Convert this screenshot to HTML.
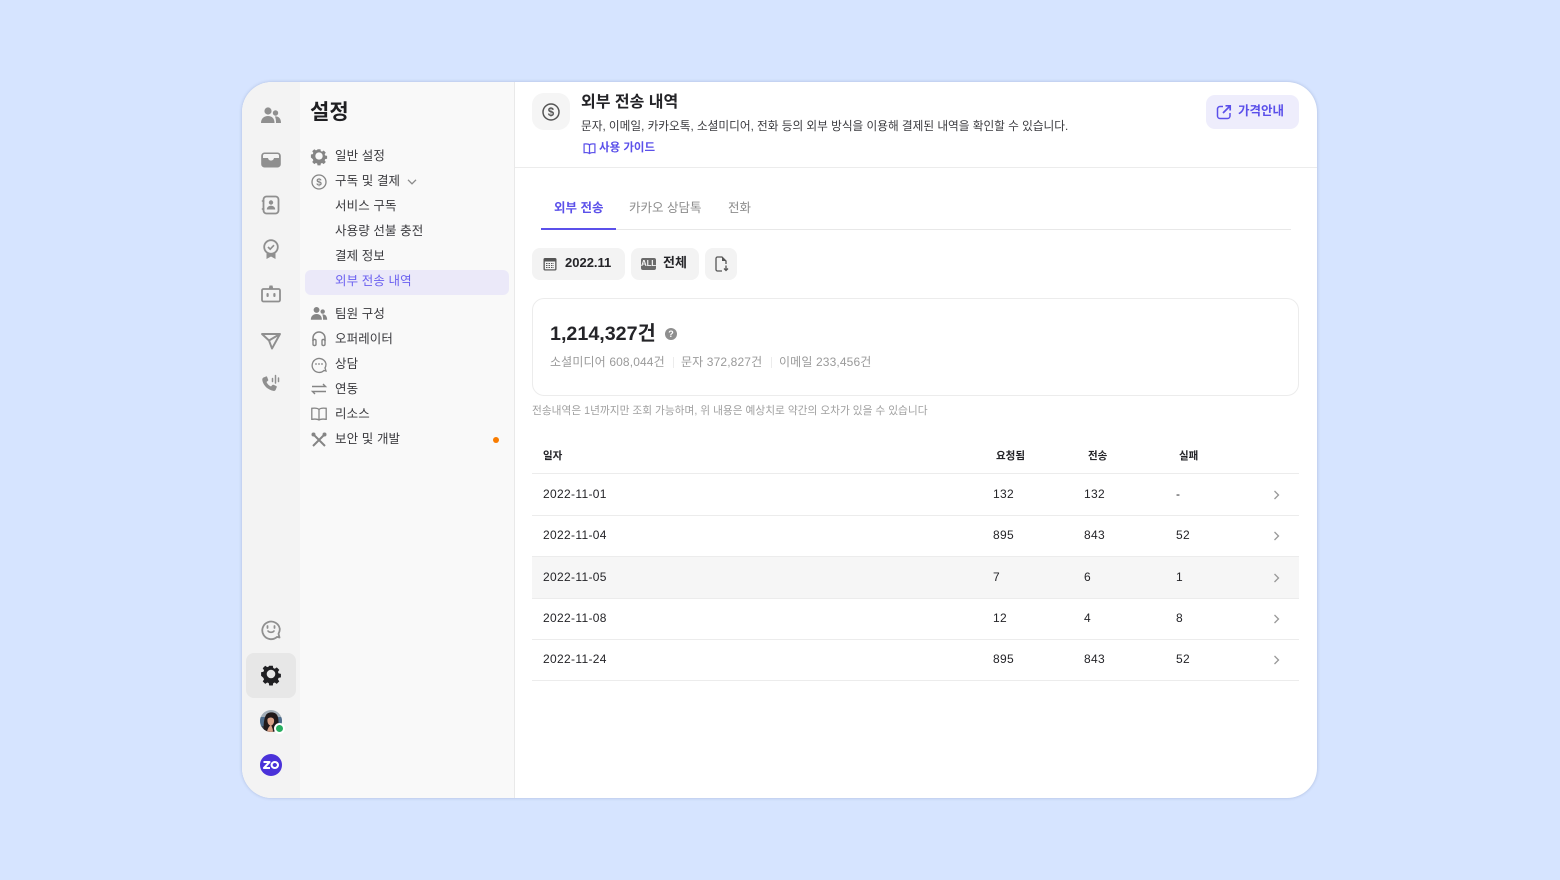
<!DOCTYPE html>
<html lang="ko"><head><meta charset="utf-8"><title>설정</title>
<style>
*{box-sizing:border-box;margin:0;padding:0}
html,body{width:1560px;height:880px;overflow:hidden;background:#d6e4ff}
body{font-family:"Liberation Sans","Noto Sans CJK KR",sans-serif;color:#242428;position:relative}
.t{position:absolute;white-space:nowrap;line-height:20px}
.abs{position:absolute}
svg{position:absolute;overflow:visible}
#app{position:absolute;left:242px;top:82px;width:1075px;height:716px;border-radius:30px;background:#fff;overflow:hidden;box-shadow:0 0 3px rgba(70,90,140,.3)}
.m{font-size:12.5px;color:#3a3a3e;letter-spacing:.1px}
.r{font-size:12px;color:#242428;letter-spacing:.33px}
.th{font-size:10.5px;font-weight:700;color:#242428}
.line{position:absolute;left:532px;width:767px;height:1px;background:#ececec}
</style></head><body>
<div id="app"></div>
<div class="abs" style="left:242px;top:82px;width:58px;height:716px;background:#f3f3f3;border-radius:30px 0 0 30px"></div>
<div class="abs" style="left:300px;top:82px;width:215px;height:716px;background:#f9f9f9;border-right:1px solid #e9e9e9"></div>
<div class="abs" style="left:246px;top:653px;width:50px;height:45px;background:#e7e7e7;border-radius:8px"></div>

<!-- rail icons -->
<svg style="left:260px;top:105px" width="22" height="22" viewBox="0 0 22 22" fill="#8f8f8f"><circle cx="8" cy="6" r="3.6"/><circle cx="15.5" cy="8" r="2.7"/><path d="M1 18c0-4.500 3-7 7-7s6.500 2.500 6.500 7z"/><path d="M15 11.500c3.500-.5 6 2 6 6.500h-5c0-2.500-.2-4.500-1-6.500z"/></svg>
<svg style="left:260px;top:149px" width="22" height="22" viewBox="0 0 22 22"><path fill="#8f8f8f" d="M4.500 3.500h13a3.300 3.300 0 0 1 3.300 3.300v8.400a3.300 3.300 0 0 1-3.300 3.300h-13a3.300 3.300 0 0 1-3.300-3.300V6.800a3.300 3.300 0 0 1 3.300-3.300z"/><path fill="#f3f3f3" d="M3 6.500c0-.8.7-1.500 1.500-1.500h13c.8 0 1.500.7 1.500 1.500v2.500h-5c-.5 1.800-1.300 2.500-3 2.500S8.500 10.800 8 9H3z"/></svg>
<svg style="left:260px;top:194px" width="22" height="22" viewBox="0 0 22 22"><rect x="3.500" y="2.500" width="15" height="17" rx="3" fill="none" stroke="#8f8f8f" stroke-width="1.800"/><path d="M1.800 7h2.500M1.800 15h2.500" stroke="#8f8f8f" stroke-width="1.500"/><circle cx="11" cy="8.500" r="2.200" fill="#8f8f8f"/><path fill="#8f8f8f" d="M6.800 15.500c0-2.500 2-3.800 4.200-3.800s4.200 1.300 4.200 3.800z"/></svg>
<svg style="left:260px;top:238px" width="22" height="22" viewBox="0 0 22 22"><circle cx="11" cy="9" r="6.800" fill="none" stroke="#8f8f8f" stroke-width="1.800"/><path d="M8 9l2.200 2.200L14 7.200" fill="none" stroke="#8f8f8f" stroke-width="1.700"/><path fill="#8f8f8f" d="M6.500 15.500h9V21L11 18.500 6.500 21z"/></svg>
<svg style="left:260px;top:283px" width="22" height="22" viewBox="0 0 22 22"><path fill="#8f8f8f" d="M9.500 2.500h3l.7 3h-4.400z"/><rect x="2" y="6" width="18" height="12.500" rx="1.500" fill="none" stroke="#8f8f8f" stroke-width="1.800"/><rect x="6.500" y="10" width="2.200" height="4" rx="1" fill="#8f8f8f"/><rect x="13.300" y="10" width="2.200" height="4" rx="1" fill="#8f8f8f"/></svg>
<svg style="left:260px;top:330px" width="22" height="22" viewBox="0 0 22 22"><path d="M2 4h18L12 18.500 9 10.500zM9 10.500L20 4" fill="none" stroke="#8f8f8f" stroke-width="1.900" stroke-linejoin="round"/></svg>
<svg style="left:260px;top:373px" width="22" height="22" viewBox="0 0 22 22"><path fill="#8f8f8f" d="M3.500 4.500L6 3.500c.6-.2 1 .1 1.200.6l1 2.600c.2.500 0 .9-.4 1.200L6.500 9c.8 2 2.300 3.500 4.500 4.500l1.200-1.400c.4-.4.800-.5 1.300-.3l2.700 1.200c.6.300.7.700.5 1.200l-1 2.600c-.4 1-1.300 1.300-2.300 1.100C7.500 16.700 3 12.200 2.300 7c-.1-1.200.3-2 1.200-2.500z"/><path d="M12.500 5.500v3M15.500 2.500v7.500M18.500 5v3.500" stroke="#8f8f8f" stroke-width="1.500" stroke-linecap="round"/></svg>
<svg style="left:260px;top:618px" width="22" height="22" viewBox="0 0 22 22"><path d="M19.500 19.500l-2.500-.6A8.800 8.800 0 1 1 19.800 11c0 1.900-.5 3.400-1.300 4.800z" fill="none" stroke="#8f8f8f" stroke-width="1.800" stroke-linejoin="round"/><path d="M7.500 8v2M14.500 8v2" stroke="#8f8f8f" stroke-width="1.800" stroke-linecap="round"/><path d="M8 13c1.500 1.800 4.500 1.800 6 0" fill="none" stroke="#8f8f8f" stroke-width="1.600" stroke-linecap="round"/></svg>
<svg style="left:260px;top:663px" width="22" height="22" viewBox="0 0 22 22"><path d="M9 1.800h4l.5 2.600 1.700.7 2.200-1.500 2.800 2.800-1.500 2.200.7 1.700 2.600.5v4l-2.600.5-.7 1.700 1.500 2.200-2.800 2.800-2.200-1.500-1.700.7-.5 2.600H9l-.5-2.600-1.700-.7-2.200 1.500-2.800-2.800 1.500-2.200-.7-1.700L0 13v-4l2.600-.5.7-1.700-1.500-2.200 2.800-2.800 2.200 1.500 1.700-.7z" transform="translate(1.100 1.100) scale(.9)" fill="#1f1f22"/><circle cx="11" cy="11" r="4.300" fill="#e7e7e7"/></svg>
<!-- avatar -->
<svg style="left:260px;top:710px" width="22" height="22" viewBox="0 0 22 22"><defs><clipPath id="c"><circle cx="11" cy="11" r="11"/></clipPath></defs><g clip-path="url(#c)"><rect width="22" height="22" fill="#a3aeb8"/><rect y="7" width="22" height="9" fill="#4e6d8c"/><rect y="16" width="22" height="6" fill="#3a4654"/><path fill="#20191a" d="M4 22c-1-6 0-14 2-17C8 1.500 15 1.500 17 5c2 3 2 10 0 17z"/><path fill="#d9a288" d="M7.500 9c1.500-2 5.500-2 6.500.5.500 3-1 6-3.200 6S7 12.500 7.500 9z"/><path fill="#d9a288" d="M7 22c.5-3 2-6 4-7 1 2 2 4 2 7z"/></g></svg>
<div class="abs" style="left:274px;top:723px;width:11px;height:11px;background:#27ae60;border:2px solid #fff;border-radius:50%;box-sizing:border-box"></div>
<div class="abs" style="left:260px;top:754px;width:22px;height:22px;background:#4a32d9;border-radius:50%"></div>
<svg style="left:260px;top:754px" width="22" height="22" viewBox="0 0 22 22"><path d="M3.500 8h6L4 14h6" fill="none" stroke="#fff" stroke-width="2.100" stroke-linejoin="round"/><ellipse cx="14.800" cy="11" rx="3.200" ry="3" fill="none" stroke="#fff" stroke-width="2.100"/></svg>

<!-- settings nav -->
<div class="t" style="left:310px;top:100px;font-size:21px;font-weight:700;line-height:26px;color:#1f1f22">설정</div>
<div class="abs" style="left:305px;top:270px;width:204px;height:25px;background:#ebe9f9;border-radius:6px"></div>
<div class="t m" style="left:335px;top:146px">일반 설정</div>
<div class="t m" style="left:335px;top:171px">구독 및 결제</div>
<div class="t m" style="left:335px;top:196px">서비스 구독</div>
<div class="t m" style="left:335px;top:221px">사용량 선불 충전</div>
<div class="t m" style="left:335px;top:246px">결제 정보</div>
<div class="t m" style="left:335px;top:271px;color:#6a5ff0">외부 전송 내역</div>
<div class="t m" style="left:335px;top:304px">팀원 구성</div>
<div class="t m" style="left:335px;top:329px">오퍼레이터</div>
<div class="t m" style="left:335px;top:354px">상담</div>
<div class="t m" style="left:335px;top:379px">연동</div>
<div class="t m" style="left:335px;top:404px">리소스</div>
<div class="t m" style="left:335px;top:429px">보안 및 개발</div>
<div class="abs" style="left:493px;top:437px;width:6px;height:6px;border-radius:50%;background:#f97c00"></div>
<svg style="left:406px;top:178px" width="12" height="8" viewBox="0 0 12 8"><path d="M2 1.800l4 4 4-4" fill="none" stroke="#8a8a8a" stroke-width="1.300"/></svg>

<!-- nav icons -->
<svg style="left:310px;top:147px" width="18" height="18" viewBox="0 0 22 22"><path d="M9 1.800h4l.5 2.600 1.700.7 2.200-1.500 2.800 2.800-1.500 2.200.7 1.700 2.600.5v4l-2.600.5-.7 1.700 1.500 2.200-2.800 2.800-2.200-1.500-1.700.7-.5 2.600H9l-.5-2.600-1.700-.7-2.200 1.500-2.800-2.800 1.500-2.200-.7-1.700L0 13v-4l2.600-.5.7-1.700-1.500-2.200 2.800-2.800 2.200 1.500 1.700-.7z" transform="translate(1.100 1.100) scale(.9)" fill="#858585"/><circle cx="11" cy="11" r="4.500" fill="#f9f9f9"/></svg>
<svg style="left:310px;top:173px" width="18" height="18" viewBox="0 0 18 18"><circle cx="9" cy="9" r="7" fill="none" stroke="#858585" stroke-width="1.300"/><text x="9" y="12.500" text-anchor="middle" font-size="10" font-weight="700" fill="#858585" font-family="Liberation Sans">$</text></svg>
<svg style="left:310px;top:305px" width="18" height="18" viewBox="0 0 22 22" fill="#858585"><circle cx="8" cy="6" r="3.600"/><circle cx="15.500" cy="8" r="2.700"/><path d="M1 18c0-4.500 3-7 7-7s6.500 2.500 6.500 7z"/><path d="M15 11.500c3.500-.5 6 2 6 6.500h-5c0-2.500-.2-4.500-1-6.500z"/></svg>
<svg style="left:310px;top:330px" width="18" height="18" viewBox="0 0 18 18"><path d="M3 11V8a6 6 0 0 1 12 0v3" fill="none" stroke="#858585" stroke-width="1.500"/><rect x="3" y="9.500" width="3" height="6" rx="1.200" fill="none" stroke="#858585" stroke-width="1.400"/><rect x="12" y="9.500" width="3" height="6" rx="1.200" fill="none" stroke="#858585" stroke-width="1.400"/></svg>
<svg style="left:310px;top:355px" width="18" height="18" viewBox="0 0 18 18"><path d="M16 16l-2-.5A7 7 0 1 1 16 9c0 1.500-.3 2.800-1 4z" fill="none" stroke="#858585" stroke-width="1.300"/><circle cx="6" cy="9" r=".9" fill="#858585"/><circle cx="9" cy="9" r=".9" fill="#858585"/><circle cx="12" cy="9" r=".9" fill="#858585"/></svg>
<svg style="left:310px;top:380px" width="18" height="18" viewBox="0 0 18 18"><path d="M2 6.500h13.500L13 4M16 11.500H2.500L5 14" fill="none" stroke="#858585" stroke-width="1.400"/></svg>
<svg style="left:310px;top:405px" width="18" height="18" viewBox="0 0 18 18"><path d="M9 4.500C7.500 3 4 3 1.800 3.300v11C4 14 7.500 14 9 15c1.500-1 5-1 7.200-.7v-11C14 3 10.500 3 9 4.500zM9 4.500V15" fill="none" stroke="#858585" stroke-width="1.300"/></svg>
<svg style="left:310px;top:431px" width="18" height="18" viewBox="0 0 18 18"><path d="M3 3l12 12M15 3L3 15" stroke="#858585" stroke-width="2" fill="none"/><circle cx="3.500" cy="3.500" r="2" fill="#858585"/><circle cx="14.500" cy="3.500" r="2" fill="#858585"/></svg>

<!-- header -->
<div class="abs" style="left:532px;top:93px;width:38px;height:37px;border-radius:12px;background:#f5f5f5"></div>
<svg style="left:541px;top:101.500px" width="20" height="20" viewBox="0 0 20 20"><circle cx="10" cy="10" r="8" fill="none" stroke="#555" stroke-width="1.500"/><text x="10" y="14" text-anchor="middle" font-size="11.500" font-weight="700" fill="#555" font-family="Liberation Sans">$</text></svg>
<div class="t" style="left:581px;top:93px;font-size:16px;font-weight:700;color:#242428">외부 전송 내역</div>
<div class="t" style="left:581px;top:117px;font-size:11.67px;color:#3a3a3e">문자, 이메일, 카카오톡, 소셜미디어, 전화 등의 외부 방식을 이용해 결제된 내역을 확인할 수 있습니다.</div>
<svg style="left:583px;top:142px" width="13" height="13" viewBox="0 0 18 18"><path d="M9 4C7.500 2.500 4 2.500 1.500 2.800v12C4 14.500 7.500 14.500 9 16c1.500-1.500 5-1.500 7.500-1.200v-12C14 2.500 10.500 2.500 9 4zM9 4v12" fill="none" stroke="#5b50ea" stroke-width="1.700"/></svg>
<div class="t" style="left:599px;top:138px;font-size:11.500px;font-weight:700;color:#5b50ea">사용 가이드</div>
<div class="abs" style="left:1206px;top:95px;width:93px;height:34px;border-radius:9px;background:#eeedfc"></div>
<svg style="left:1216px;top:104px" width="16" height="16" viewBox="0 0 16 16"><path d="M7 2.500H4A2.500 2.500 0 0 0 1.500 5v7A2.500 2.500 0 0 0 4 14.500h7.500A2.500 2.500 0 0 0 14 12V9" fill="none" stroke="#5b50ea" stroke-width="1.500"/><path d="M7 9l6.500-6.500M9.500 1.800h4.700v4.700" fill="none" stroke="#5b50ea" stroke-width="1.700"/></svg>
<div class="t" style="left:1238px;top:101px;font-size:12.500px;font-weight:700;color:#5b50ea">가격안내</div>
<div class="abs" style="left:515px;top:167px;width:802px;height:1px;background:#ececec"></div>

<!-- tabs -->
<div class="t" style="left:554px;top:198px;font-size:12.500px;font-weight:700;color:#5b50ea">외부 전송</div>
<div class="t" style="left:629px;top:198px;font-size:12.500px;color:#8c8c8c">카카오 상담톡</div>
<div class="t" style="left:728px;top:198px;font-size:12.500px;color:#8c8c8c">전화</div>
<div class="abs" style="left:541px;top:229px;width:750px;height:1px;background:#e8e8e8"></div>
<div class="abs" style="left:541px;top:228px;width:75px;height:2px;background:#5b50ea"></div>

<!-- filters -->
<div class="abs" style="left:532px;top:248px;width:93px;height:32px;border-radius:8px;background:#f3f3f3"></div>
<div class="abs" style="left:631px;top:248px;width:68px;height:32px;border-radius:8px;background:#f3f3f3"></div>
<div class="abs" style="left:705px;top:248px;width:32px;height:32px;border-radius:8px;background:#f3f3f3"></div>
<svg style="left:543px;top:257px" width="14" height="14" viewBox="0 0 14 14"><rect x=".5" y="1" width="13" height="12.500" rx="1.500" fill="#555"/><rect x="1.800" y="4.500" width="10.400" height="7.800" fill="#f3f3f3"/><path d="M3 6.500h8M3 8.500h8M3 10.500h8" stroke="#555" stroke-width="1.100" stroke-dasharray="1.500 1"/></svg>
<div class="t" style="left:565px;top:253px;font-size:13px;font-weight:700;color:#242428">2022.11</div>
<div class="abs" style="left:641px;top:258px;width:15px;height:12px;border-radius:2px;background:#6a6a6a;color:#f3f3f3;font-size:8px;font-weight:700;line-height:12px;text-align:center;letter-spacing:-.2px">ALL</div>
<div class="t" style="left:663px;top:253px;font-size:13px;font-weight:700;color:#242428">전체</div>
<svg style="left:714px;top:256px" width="16" height="16" viewBox="0 0 16 16"><path d="M8 15H3.500A1.500 1.500 0 0 1 2 13.500v-11A1.500 1.500 0 0 1 3.500 1H8l4 4v3" fill="none" stroke="#555" stroke-width="1.300"/><path fill="#555" d="M8 1v4h4z"/><path d="M12 9.500v5M10 12.500l2 2 2-2" fill="none" stroke="#555" stroke-width="1.300"/></svg>

<!-- summary -->
<div class="abs" style="left:532px;top:298px;width:767px;height:98px;border:1px solid #ececec;border-radius:12px"></div>
<div class="t" style="left:550px;top:322px;font-size:19.7px;font-weight:700;line-height:24px;color:#242428">1,214,327건</div>
<div class="abs" style="left:665px;top:328px;width:12px;height:12px;border-radius:50%;background:#8f8f8f;color:#fff;font-size:9px;font-weight:700;line-height:12px;text-align:center">?</div>
<div class="t" style="left:550px;top:352px;font-size:12px;color:#9a9a9a;letter-spacing:.13px">소셜미디어 608,044건</div>
<div class="abs" style="left:673px;top:357px;width:1px;height:11px;background:#ececec"></div>
<div class="t" style="left:681px;top:352px;font-size:12px;color:#9a9a9a;letter-spacing:.13px">문자 372,827건</div>
<div class="abs" style="left:771px;top:357px;width:1px;height:11px;background:#ececec"></div>
<div class="t" style="left:779px;top:352px;font-size:12px;color:#9a9a9a;letter-spacing:.13px">이메일 233,456건</div>
<div class="t" style="left:532px;top:401px;font-size:10.7px;color:#a0a0a0">전송내역은 1년까지만 조회 가능하며, 위 내용은 예상치로 약간의 오차가 있을 수 있습니다</div>

<!-- table -->
<div class="t th" style="left:543px;top:446px">일자</div>
<div class="t th" style="left:996px;top:446px">요청됨</div>
<div class="t th" style="left:1088px;top:446px">전송</div>
<div class="t th" style="left:1179px;top:446px">실패</div>
<div class="abs" style="left:532px;top:557px;width:767px;height:41px;background:#f6f6f6"></div>
<div class="line" style="top:473px"></div><div class="line" style="top:515px"></div><div class="line" style="top:556px"></div><div class="line" style="top:598px"></div><div class="line" style="top:639px"></div><div class="line" style="top:680px"></div>

<div class="t r" style="left:543px;top:484px">2022-11-01</div><div class="t r" style="left:993px;top:484px">132</div><div class="t r" style="left:1084px;top:484px">132</div><div class="t r" style="left:1176px;top:484px">-</div>
<div class="t r" style="left:543px;top:525px">2022-11-04</div><div class="t r" style="left:993px;top:525px">895</div><div class="t r" style="left:1084px;top:525px">843</div><div class="t r" style="left:1176px;top:525px">52</div>
<div class="t r" style="left:543px;top:567px">2022-11-05</div><div class="t r" style="left:993px;top:567px">7</div><div class="t r" style="left:1084px;top:567px">6</div><div class="t r" style="left:1176px;top:567px">1</div>
<div class="t r" style="left:543px;top:608px">2022-11-08</div><div class="t r" style="left:993px;top:608px">12</div><div class="t r" style="left:1084px;top:608px">4</div><div class="t r" style="left:1176px;top:608px">8</div>
<div class="t r" style="left:543px;top:649px">2022-11-24</div><div class="t r" style="left:993px;top:649px">895</div><div class="t r" style="left:1084px;top:649px">843</div><div class="t r" style="left:1176px;top:649px">52</div>

<svg style="left:1273px;top:490px" width="8" height="10" viewBox="0 0 8 10"><path d="M1.500 1l4 4-4 4" fill="none" stroke="#999" stroke-width="1.300"/></svg>
<svg style="left:1273px;top:531px" width="8" height="10" viewBox="0 0 8 10"><path d="M1.500 1l4 4-4 4" fill="none" stroke="#999" stroke-width="1.300"/></svg>
<svg style="left:1273px;top:573px" width="8" height="10" viewBox="0 0 8 10"><path d="M1.500 1l4 4-4 4" fill="none" stroke="#999" stroke-width="1.300"/></svg>
<svg style="left:1273px;top:614px" width="8" height="10" viewBox="0 0 8 10"><path d="M1.500 1l4 4-4 4" fill="none" stroke="#999" stroke-width="1.300"/></svg>
<svg style="left:1273px;top:655px" width="8" height="10" viewBox="0 0 8 10"><path d="M1.500 1l4 4-4 4" fill="none" stroke="#999" stroke-width="1.300"/></svg>
</body></html>
